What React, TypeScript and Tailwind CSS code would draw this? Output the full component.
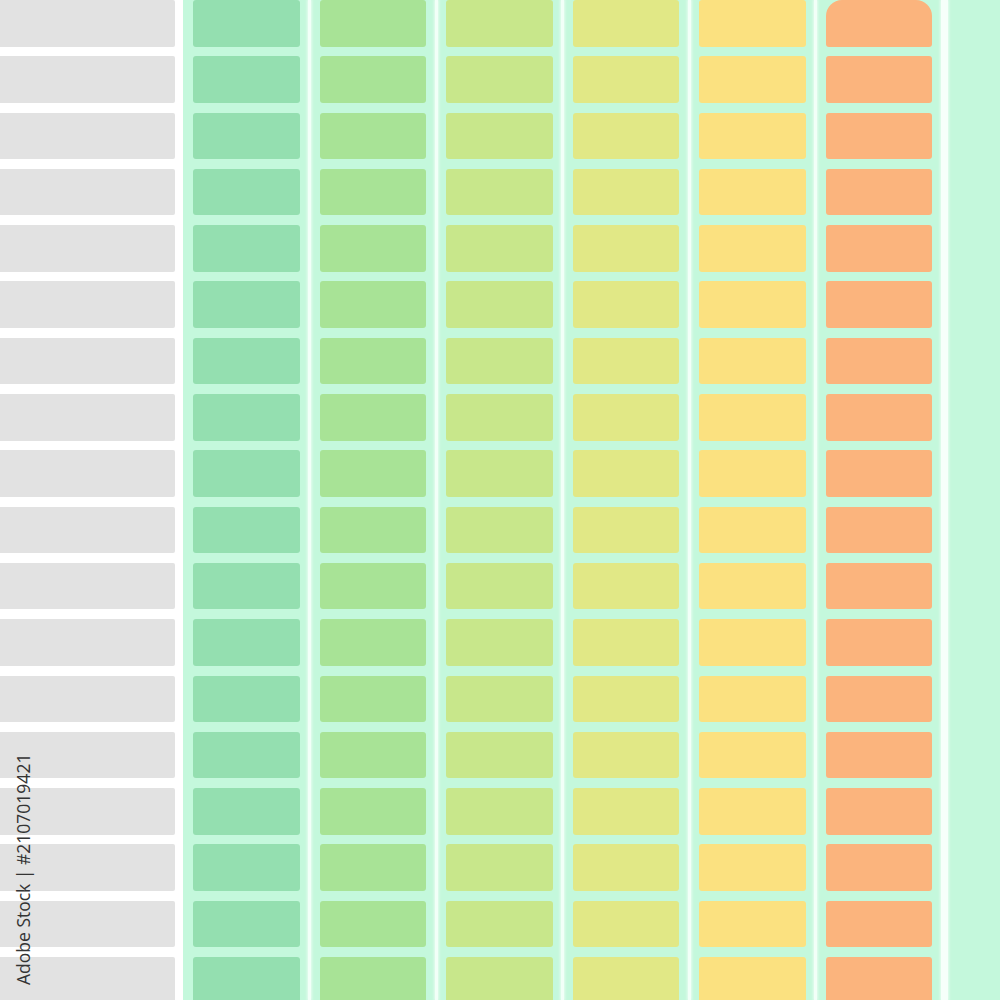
import React from "react";

const ROWS = Array.from({ length: 18 }, (_, i) => i);

const COLS = [
  "bg-[#94dfb0]",
  "bg-[#a8e396]",
  "bg-[#c8e78b]",
  "bg-[#e1e886]",
  "bg-[#fbe180]",
  "bg-[#fbb47d]",
];

function Column({ color, last }: { color: string; last?: boolean }) {
  return (
    <div className="flex flex-col gap-[9.8px] w-[106.5px] shrink-0">
      {ROWS.map((r) => (
        <div
          key={r}
          className={`${color} h-[46.5px] shrink-0 ${
            r === 0 && last ? "rounded-t-[16px] rounded-b-[3px]" : "rounded-[3px]"
          }`}
        />
      ))}
    </div>
  );
}

function Divider() {
  return (
    <div className="w-[20px] shrink-0 flex justify-center">
      <div className="w-[3px] h-full bg-[#f2fff8] shadow-[0_0_3px_1px_rgba(255,255,255,0.6)]" />
    </div>
  );
}

export default function App() {
  return (
    <div className="relative w-[1000px] h-[1000px] overflow-hidden flex bg-white">
      {/* gray column */}
      <div className="w-[175px] shrink-0 flex flex-col gap-[9.8px] bg-white">
        {ROWS.map((r) => (
          <div key={r} className="h-[46.5px] shrink-0 bg-[#e2e2e2] rounded-r-[2px]" />
        ))}
      </div>
      {/* white strip */}
      <div className="w-[8px] shrink-0 bg-white" />
      {/* mint area */}
      <div className="flex-1 bg-[#c4f8dc] flex pl-[10px]">
        {COLS.map((c, i) => (
          <React.Fragment key={i}>
            <Column color={c} last={i === COLS.length - 1} />
            {i < COLS.length - 1 && <Divider />}
          </React.Fragment>
        ))}
        <div className="w-[9px] shrink-0" />
        <div className="w-[7px] shrink-0 bg-[#f6fffa] shadow-[0_0_3px_1px_rgba(255,255,255,0.6)]" />
        <div className="flex-1" />
      </div>
      {/* vertical watermark caption */}
      <div className="absolute left-[13px] bottom-[15px] w-[22px] h-[228px] pointer-events-none">
        <div className="origin-bottom-left -rotate-90 translate-x-[21px] whitespace-nowrap text-[17.5px] leading-[22px] text-[#343434] font-['Open_Sans',sans-serif] absolute left-0 bottom-0">
          Adobe Stock | #2107019421
        </div>
      </div>
    </div>
  );
}
